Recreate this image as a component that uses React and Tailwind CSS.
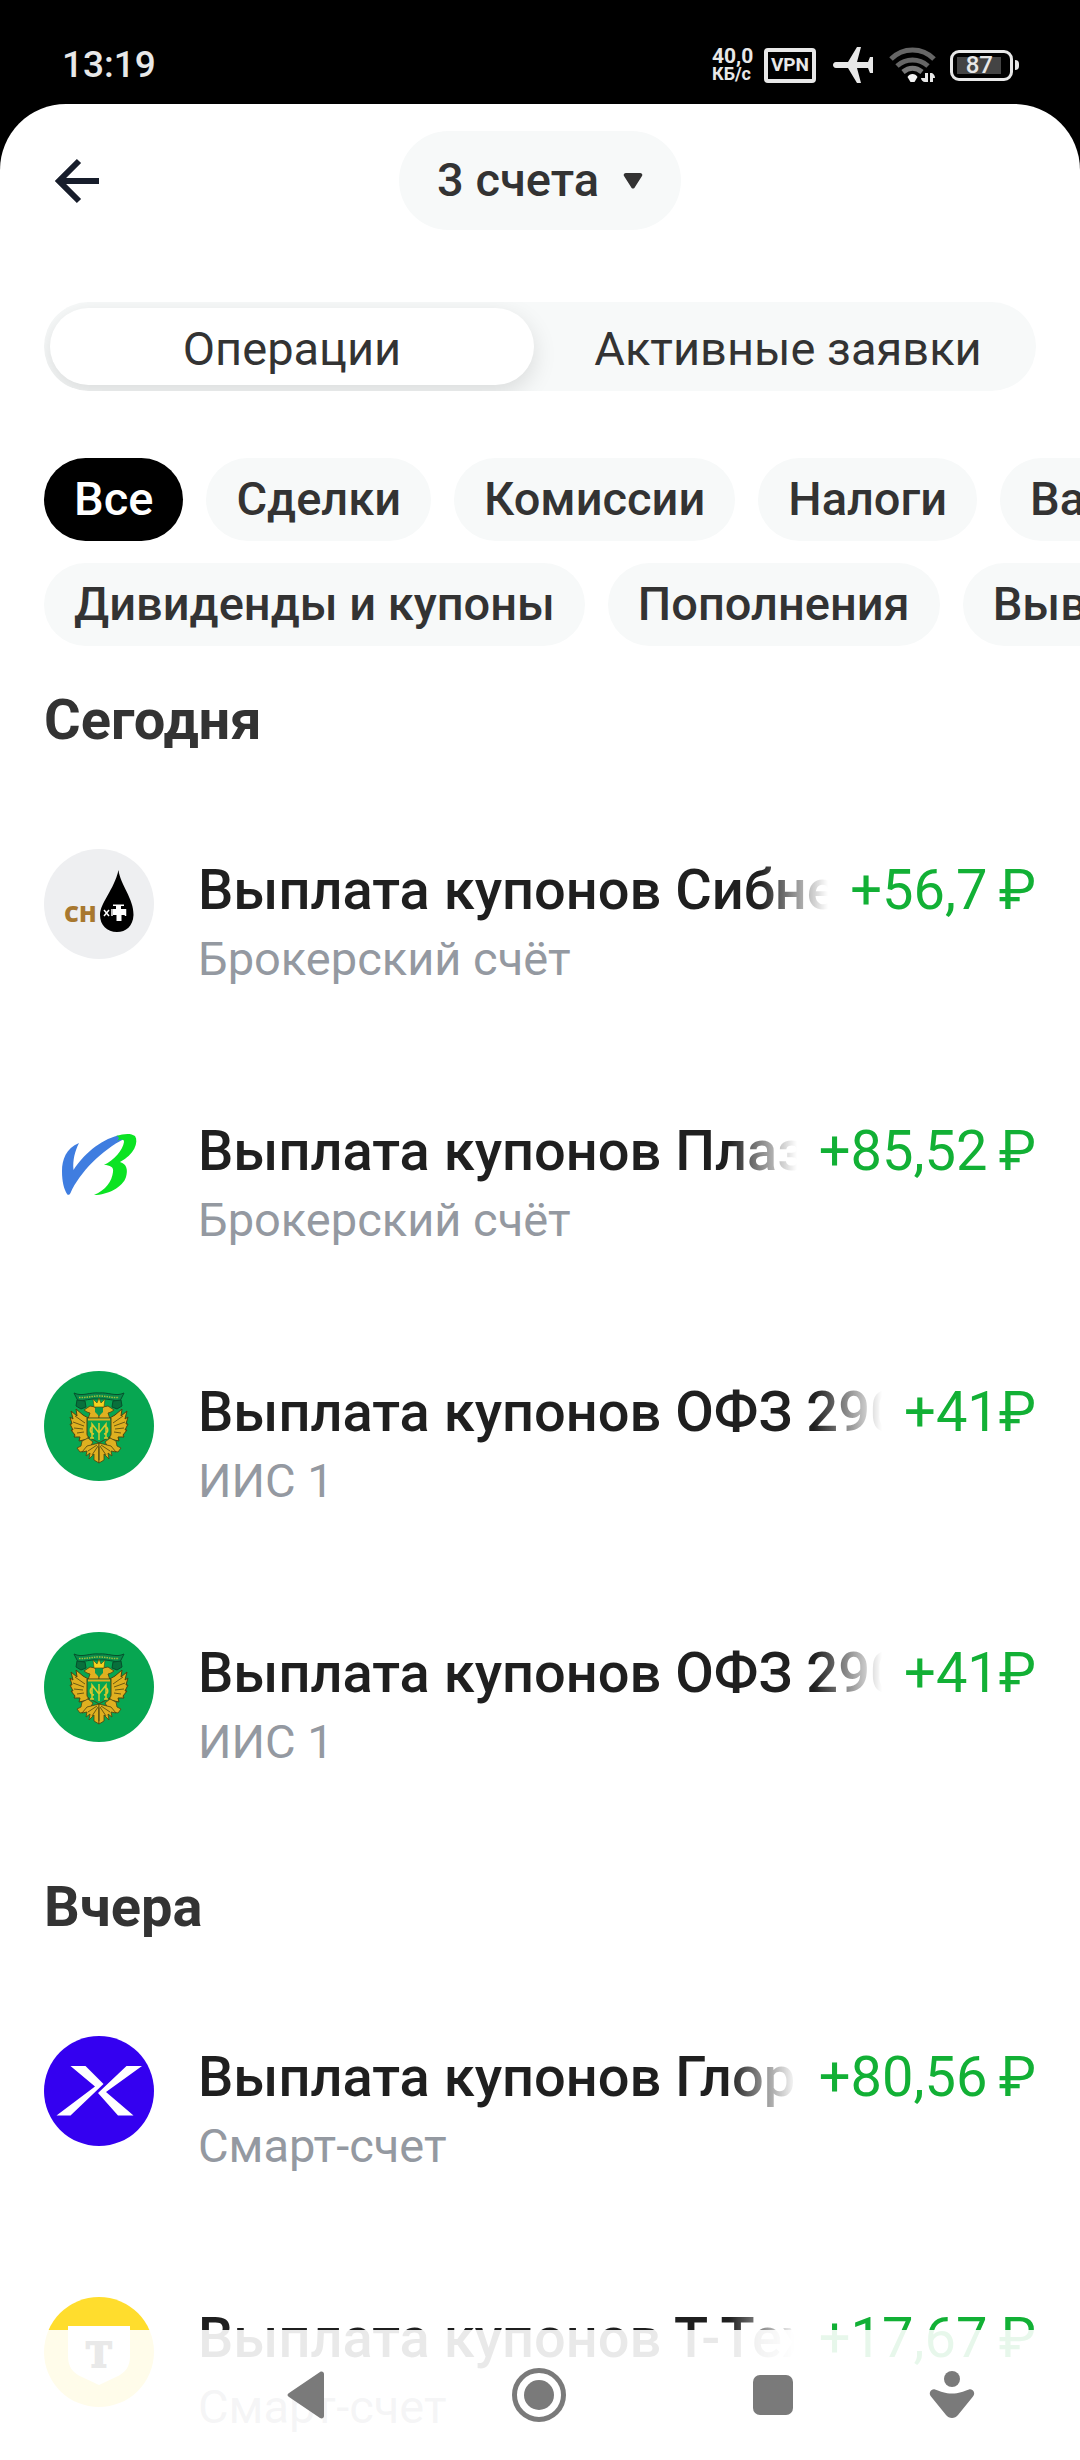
import React from 'react';

const ACCOUNT_TABS = ['Операции', 'Активные заявки'];

const FILTER_ROWS = [
    ['Все', 'Сделки', 'Комиссии', 'Налоги', 'Валюта'],
    ['Дивиденды и купоны', 'Пополнения', 'Выводы'],
];

const SibneftLogo = () => (
    <svg viewBox="0 0 110 110" className="size-full" aria-hidden="true">
        <circle cx="55" cy="55" r="55" fill="#eeeff1" />
        <text x="20" y="73" fontFamily="Open Sans, sans-serif" fontWeight="800" fontSize="23" fill="#a8782f">CH</text>
        <path d="M74.500 21C76 35 90 50 89.500 66C89 77 82 83 73 83C63 83 56 76 56 66C56 54 70 41 74.500 21Z" fill="#000" />
        <path d="M60 61l5 6M65 61l-5 6" stroke="#fff" strokeWidth="1.500" />
        <path d="M72 58v-1h-3v-1.500h11v1.500h-3v3h4v6h-3.500v6h-5v-6H69v-6h3z" fill="#fff" />
        <path d="M68 60v7M81.500 60v7" stroke="#fff" strokeWidth="1.500" />
    </svg>
);

const PlazaLogo = () => (
    <svg viewBox="0 0 110 110" className="size-full" aria-hidden="true">
        <path
            d="M35 33C22 38 18 50 18 61C18 72 20 79 23 84C24 85.500 25.500 85 26.500 83C36 62 58 40 80 29L74 25.500C56 30 39 45 29.500 60C28.500 50 31 41 35 33Z"
            fill="#3f7de0"
        />
        <path
            d="M72 26C80 23.500 87 23 91 26C95 32 90 45 76 52C83 54 84 60 82 67C79 77 64 85 50 85C62 80 68 71 69 62C70 57 66 55 60 55C70 50 79 40 80 32C80 29 77 29 73 31C76 28 75 26.500 72 26Z"
            fill="#0be323"
        />
    </svg>
);

const EagleHalf = () => (
    <g>
        {/* ribbon end */}
        <path d="M55 22C46 21 38 26 30 22L34 30C40 30 47 27 55 28" fill="#0a8a4a" stroke="#064f2c" strokeWidth="1" />
        <path d="M33 29l8 1 1 6-5 2-5-3z" fill="#08703c" stroke="#064f2c" strokeWidth="1" />
        {/* head */}
        <path d="M40 39l6-4 5 1 2 4 2 5v3H44l2-6-3-1z" fill="#dfb020" stroke="#4a4410" strokeWidth=".8" />
        {/* wing */}
        <path
            d="M46 48L39 44 32 38 33 45 27 40 29 48 26 46 28 53 26 53 29 59 27 59 31 64 30 66 36 66 35 70 44 68z"
            fill="#dfb020"
            stroke="#4a4410"
            strokeWidth="1"
        />
        <path d="M31 45l10 7M29 51l11 4M30 57l9 1M33 62l7-1" stroke="#6a5a12" strokeWidth="1" />
        {/* leg */}
        <path d="M44 67l-6 3-1 5-4 2 3 4 5-1 5-4 3-5z" fill="#dfb020" stroke="#4a4410" strokeWidth=".8" />
        {/* tail */}
        <path d="M55 72L43 75 38 81 43 80 42 85 46 82 45 88 50 83 50 89 55 92z" fill="#dfb020" stroke="#4a4410" strokeWidth=".8" />
        <path d="M54 75l-6 9M53 74l-9 6M55 76v13" stroke="#6a5a12" strokeWidth="1" />
    </g>
);

const OfzLogo = () => (
    <svg viewBox="0 0 110 110" className="size-full" aria-hidden="true">
        <circle cx="55" cy="55" r="55" fill="#07a651" />
        <EagleHalf />
        <g transform="translate(110 0) scale(-1 1)">
            <EagleHalf />
        </g>
        <path d="M35 26.500C42 27 48 25 55 25C62 25 68 27 75 26.500" fill="none" stroke="#9fc03a" strokeWidth="1.500" strokeDasharray="1.500 1" />
        <path d="M50 36l-1-8 4 4 2-5 2 5 4-4-1 8z" fill="#f2d21f" stroke="#4a4410" strokeWidth=".6" />
        <path d="M51 37h8v4l-4 4-4-4z" fill="#0b9a4c" />
        <path d="M43 47h24v16c0 4-6 5-12 9c-6-4-12-5-12-9z" fill="#07a651" stroke="#4a4410" strokeWidth="1" />
        <path d="M44 48.500h22" stroke="#dfb020" strokeWidth="2" />
        <path
            d="M48 67V53l7 9 7-9v14M55 52v17M46 67h4M60 67h4M50 55c-5 1-5 7 0 8M60 55c5 1 5 7 0 8"
            fill="none"
            stroke="#d7c82c"
            strokeWidth="1.500"
        />
    </svg>
);

const GloraxLogo = () => (
    <svg viewBox="0 0 110 110" className="size-full" aria-hidden="true">
        <circle cx="55" cy="55" r="55" fill="#3400f0" />
        <path d="M26.500 30H41.500L59.500 48 26.500 79.500H12.500L51 50.500z" fill="#fff" />
        <path d="M82.500 30H98L62 56 89.500 79.500H74L54 57z" fill="#fff" />
    </svg>
);

const TLogo = () => (
    <svg viewBox="0 0 110 110" className="size-full" aria-hidden="true">
        <circle cx="55" cy="55" r="55" fill="#ffdd2d" />
        <path d="M24 29H86V59C86 70 81 76 72 80L55 88 38 80C29 76 24 70 24 59Z" fill="#fff" />
        <text
            x="55"
            y="70"
            textAnchor="middle"
            fontFamily="DejaVu Serif, serif"
            fontWeight="700"
            fontSize="34"
            fill="#222"
            stroke="#222"
            strokeWidth="2"
        >
            T
        </text>
    </svg>
);

const SECTIONS = [
    {
        title: 'Сегодня',
        operations: [
            { id: 1, logo: SibneftLogo, name: 'Выплата купонов Сибнефтехим', account: 'Брокерский счёт', amount: '+56,7\u2009₽' },
            { id: 2, logo: PlazaLogo, name: 'Выплата купонов Плаза', account: 'Брокерский счёт', amount: '+85,52\u2009₽' },
            { id: 3, logo: OfzLogo, name: 'Выплата купонов ОФЗ 29006', account: 'ИИС 1', amount: '+41₽' },
            { id: 4, logo: OfzLogo, name: 'Выплата купонов ОФЗ 29006', account: 'ИИС 1', amount: '+41₽' },
        ],
    },
    {
        title: 'Вчера',
        operations: [
            { id: 5, logo: GloraxLogo, name: 'Выплата купонов Глоракс', account: 'Смарт-счет', amount: '+80,56\u2009₽' },
            { id: 6, logo: TLogo, name: 'Выплата купонов Т-Технологии', account: 'Смарт-счет', amount: '+17,67\u2009₽' },
        ],
    },
];

const StatusBar = () => (
    <div className="flex h-[104px] shrink-0 items-center justify-between pt-[26px] pr-[61px] pl-[62px] text-[#e8e8e8]">
        <span className="text-[37px] leading-[40px] font-medium">13:19</span>
        <div className="flex items-center">
            <div className="mr-3 flex w-10 flex-col font-bold">
                <span className="text-[21px] leading-[18px]">40,0</span>
                <span className="text-[18px] leading-[18px]">КБ/с</span>
            </div>
            <span className="mr-4 flex h-[35px] w-[52px] items-center justify-center rounded-[4px] border-4 border-[#e8e8e8] text-[19px] font-bold">
                VPN
            </span>
            <svg viewBox="0 0 42 38" className="mr-[14px] h-[38px] w-[42px]" fill="currentColor" aria-hidden="true">
                <path d="M4 16h12L25 1h4l-4 15h11l2-5h3v16h-3l-2-5H25l4 15h-4L16 22H4c-4 0-4-6 0-6z" />
            </svg>
            <svg viewBox="0 0 48 38" className="mr-[14px] h-[38px] w-12" fill="none" aria-hidden="true">
                <path d="M3 13C15 1 34 1 46 13" stroke="#666" strokeWidth="5" />
                <path d="M9 20C18 12 31 12 40 20" stroke="#666" strokeWidth="5" />
                <path d="M15 26C21 21 28 21 34 26" stroke="#777" strokeWidth="5" />
                <path d="M19.500 31c2-4 8-4 10 0l-3 5h-4z" fill="#f4f4f4" />
                <path d="M37 27h3v9h-3c-2 0-4-2-4-4h4zM42 36V27h2c2 1 3 3 3 5h-2v4z" fill="#e8e8e8" />
            </svg>
            <div className="flex items-center gap-[2px]">
                <div className="flex h-[31px] w-[63px] rounded-[9px] border-3 border-[#e8e8e8] p-1">
                    <span className="flex w-11 items-center justify-end bg-[#444] pr-2 text-[24px] leading-none font-medium">87</span>
                </div>
                <div className="h-[10px] w-1 rounded-r-sm bg-[#e8e8e8]" />
            </div>
        </div>
    </div>
);

const Header = () => (
    <header className="grid grid-cols-[1fr_auto_1fr] items-center px-11">
        <button type="button" aria-label="Назад" className="size-[66px] justify-self-start">
            <svg viewBox="0 0 66 66" className="size-full" fill="none" stroke="#171d2b" strokeWidth="6" aria-hidden="true">
                <path d="M35 13L15 33l20 20M15 33h40" />
            </svg>
        </button>
        <button type="button" className="flex h-[99px] items-center gap-6 rounded-full bg-[#f7f9f9] px-[38px] text-[47px] font-medium">
            3 счета
            <svg viewBox="0 0 20 16" className="h-4 w-5" fill="currentColor" aria-hidden="true">
                <path d="M3 0h14c2 0 3 2 2 3l-7 11c-1 2-3 2-4 0L1 3C0 2 1 0 3 0z" />
            </svg>
        </button>
    </header>
);

const Operation = ({ logo: Logo, name, account, amount }) => (
    <li className="flex gap-11">
        <div className="size-[110px] shrink-0">
            <Logo />
        </div>
        <div className="min-w-0 flex-1 pt-[7px]">
            <div className="flex gap-[22px] text-[56px] leading-[68px]">
                <p className="min-w-0 flex-1 overflow-hidden font-medium whitespace-nowrap text-[#1f1f1f] [mask-image:linear-gradient(to_right,black_calc(100%-68px),transparent)]">
                    {name}
                </p>
                <p className="shrink-0 text-[#12b035]">{amount}</p>
            </div>
            <p className="text-[47px] leading-[70px] text-[#9499a1]">{account}</p>
        </div>
    </li>
);

const NavBar = () => (
    <nav className="fixed inset-x-0 bottom-0 grid h-[130px] grid-cols-[188fr_234fr_234fr_234fr_124fr_66fr] place-items-center bg-white/90 text-[#7a7a7a]">
        <button type="button" aria-label="Назад" className="col-start-2">
            <svg viewBox="0 0 54 54" className="size-[54px]" fill="currentColor" aria-hidden="true">
                <path d="M42 4c2-1 4 0 4 2v42c0 2-2 3-4 2L11 29c-2-1-2-3 0-4z" />
            </svg>
        </button>
        <button type="button" aria-label="Домой">
            <svg viewBox="0 0 54 54" className="size-[54px]" aria-hidden="true">
                <circle cx="27" cy="27" r="24.500" fill="none" stroke="currentColor" strokeWidth="5" />
                <circle cx="27" cy="27" r="15" fill="currentColor" />
            </svg>
        </button>
        <button type="button" aria-label="Недавние приложения">
            <svg viewBox="0 0 54 54" className="size-[54px]" fill="currentColor" aria-hidden="true">
                <rect x="7" y="7" width="40" height="40" rx="7" />
            </svg>
        </button>
        <button type="button" aria-label="Специальные возможности">
            <svg viewBox="0 0 54 54" className="size-[54px]" fill="currentColor" aria-hidden="true">
                <circle cx="27" cy="11" r="8" />
                <path d="M10 21.500c6 2 10 4 17 4s11-2 17-4c4-1 7 4 4 7L33 47c-3 4-9 4-12 0L6 28.500c-3-3 0-8 4-7z" />
            </svg>
        </button>
    </nav>
);

const App = () => (
    <div className="flex h-screen flex-col overflow-hidden bg-black font-[Roboto,sans-serif] text-[#333]">
        <StatusBar />
        <main className="flex-1 overflow-hidden rounded-t-[66px] bg-white pt-[27px]">
            <Header />

            <div role="tablist" className="mx-11 mt-[72px] grid h-[89px] grid-cols-2 overflow-hidden rounded-full bg-[#f7f9f9] text-[47px]">
                {ACCOUNT_TABS.map((tab, index) => (
                    <button
                        key={tab}
                        type="button"
                        role="tab"
                        aria-selected={index === 0}
                        className={`m-[6px] rounded-full pt-1 leading-[56px] whitespace-nowrap ${
                            index === 0 ? 'bg-white shadow-[0_8px_24px_rgba(0,0,0,0.12)]' : ''
                        }`}
                    >
                        {tab}
                    </button>
                ))}
            </div>

            <div className="mt-[67px] flex flex-col gap-[22px] overflow-hidden pl-11">
                {FILTER_ROWS.map((row, rowIndex) => (
                    <div key={row[0]} className="flex gap-[23px]">
                        {row.map((filter, index) => (
                            <button
                                key={filter}
                                type="button"
                                className={`h-[83px] shrink-0 rounded-full px-[30px] text-[47px] font-medium ${
                                    rowIndex === 0 && index === 0 ? 'bg-black text-white' : 'bg-[#f7f9f9]'
                                }`}
                            >
                                {filter}
                            </button>
                        ))}
                    </div>
                ))}
            </div>

            <div className="flex flex-col gap-[97px] px-11 pt-[41px]">
                {SECTIONS.map(({ title, operations }) => (
                    <section key={title}>
                        <h2 className="text-[56px] leading-[66px] font-bold">{title}</h2>
                        <ul className="mt-24 flex flex-col gap-[116px]">
                            {operations.map((operation) => (
                                <Operation key={operation.id} {...operation} />
                            ))}
                        </ul>
                    </section>
                ))}
            </div>
        </main>
        <NavBar />
    </div>
);

export default App;
